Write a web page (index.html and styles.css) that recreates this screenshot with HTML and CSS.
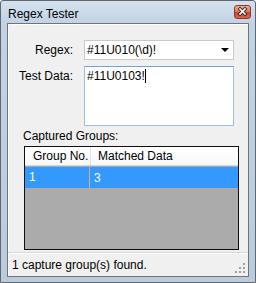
FILE: index.html
```html
<!DOCTYPE html>
<html lang="en-us">
<head>
<meta charset="utf-8">
<title>Regex Tester</title>
<link rel="stylesheet" href="styles.css">
</head>
<body>

<div class="window">
    <div class="titlebar">
        <span class="title">Regex Tester</span>
        <span class="closeBtn">
            <svg width="17" height="14" viewBox="0 0 17 14">
                <path d="M6 4 L11 9 M11 4 L6 9" stroke="#3a2a28" stroke-width="3.4" stroke-linecap="square"/>
                <path d="M6 4 L11 9 M11 4 L6 9" stroke="#ffffff" stroke-width="1.6" stroke-linecap="square"/>
            </svg>
        </span>
    </div>

    <div class="client">
        <div class="formGrid">
            <label class="fieldLabel">Regex:</label>
            <div class="combo">
                <span class="comboText">#11U010(\d)!</span>
                <span class="comboArrow"></span>
            </div>
            <label class="fieldLabel topLabel">Test Data:</label>
            <div class="textBox">#11U0103!<span class="caret"></span></div>
        </div>

        <div class="groupsLabel">Captured Groups:</div>

        <div class="listView">
            <div class="listHeader">
                <span class="colOne">Group No.</span>
                <span class="colTwo">Matched Data</span>
            </div>
            <div class="listRow selected">
                <span class="colOne">1</span>
                <span class="colTwo">3</span>
            </div>
        </div>

        <div class="statusBar">
            <span>1 capture group(s) found.</span>
            <svg class="grip" width="11" height="11" viewBox="0 0 11 11">
                <rect x="8" y="0" width="2" height="2" fill="#a0a0a0"/>
                <rect x="4" y="4" width="2" height="2" fill="#a0a0a0"/>
                <rect x="8" y="4" width="2" height="2" fill="#a0a0a0"/>
                <rect x="0" y="8" width="2" height="2" fill="#a0a0a0"/>
                <rect x="4" y="8" width="2" height="2" fill="#a0a0a0"/>
                <rect x="8" y="8" width="2" height="2" fill="#a0a0a0"/>
            </svg>
        </div>
    </div>
</div>

</body>
</html>
```

FILE: styles.css
```css
body {
    margin: 0;
    font-family: "Liberation Sans", Arial, sans-serif;
    font-size: 12px;
    color: #000;
    background: #fff;
}
.window {
    width: 256px;
    height: 283px;
    box-sizing: border-box;
    border: 1px solid #5e6772;
    border-radius: 3px 3px 0 0;
    background: linear-gradient(#d5e1ee, #c3d3e4 22px, #bccbdc);
    display: flex;
    flex-direction: column;
}
.titlebar {
    height: 22px;
    display: flex;
    align-items: flex-start;
    justify-content: space-between;
    padding: 0 4px 0 7px;
}
.title {
    line-height: 15px;
    padding-top: 6px;
}
.closeBtn {
    margin-top: 4px;
    width: 17px;
    height: 14px;
    box-sizing: border-box;
    border: 1px solid #8b3b2c;
    border-radius: 3px;
    background: linear-gradient(#eeb09c, #dd7a60 45%, #c7452b 55%, #d8664a);
    display: flex;
}
.closeBtn svg {
    margin: -1px;
}
.client {
    flex: 1;
    margin: 0 6px 5px 6px;
    border: 1px solid #6b7480;
    box-shadow: inset 1px 1px 0 #ffffff;
    background: #f0f0f0;
    display: flex;
    flex-direction: column;
}
.formGrid {
    display: grid;
    grid-template-columns: 65px 150px;
    grid-template-rows: 20px 60px;
    column-gap: 11px;
    row-gap: 6px;
    padding-top: 16px;
}
.fieldLabel {
    text-align: right;
    align-self: center;
    line-height: 15px;
}
.topLabel {
    align-self: start;
    padding-top: 3px;
}
.combo {
    box-sizing: border-box;
    border: 1px solid #c9c9c9;
    background: #fff;
    display: flex;
    align-items: center;
    justify-content: space-between;
    padding: 0 3px 0 2px;
}
.comboArrow {
    width: 0;
    height: 0;
    border-left: 4px solid transparent;
    border-right: 4px solid transparent;
    border-top: 4px solid #000;
    margin-right: 1px;
}
.textBox {
    box-sizing: border-box;
    border: 1px solid #9ac1ea;
    border-top-color: #6fa3d9;
    background: #fff;
    padding: 2px 2px;
    line-height: 15px;
}
.caret {
    display: inline-block;
    width: 1px;
    height: 14px;
    background: #000;
    vertical-align: -3px;
}
.groupsLabel {
    margin-top: 3px;
    padding-left: 15px;
    line-height: 15px;
}
.listView {
    margin: 2px 0 0 16px;
    width: 215px;
    height: 104px;
    box-sizing: border-box;
    border: 1px solid #101010;
    background: #ababab;
}
.listHeader {
    height: 19px;
    box-sizing: border-box;
    background: linear-gradient(#ffffff, #f7f8fa);
    border-bottom: 1px solid #d5d5d5;
    display: flex;
    align-items: center;
}
.listHeader .colOne {
    width: 57px;
    padding-left: 8px;
    border-right: 1px solid #e3e3e3;
    line-height: 18px;
}
.listHeader .colTwo {
    padding-left: 7px;
}
.listRow {
    margin-top: 1px;
    height: 21px;
    display: flex;
    align-items: center;
}
.selected {
    background: #3399ff;
    color: #fff;
}
.listRow .colOne {
    width: 60px;
    padding-left: 4px;
    border-right: 1px solid #cfae8a;
    line-height: 21px;
}
.listRow .colTwo {
    padding-left: 4px;
}
.statusBar {
    margin-top: 2px;
    flex: 1;
    border-top: 1px solid #d7d7d7;
    box-shadow: inset 0 1px 0 #ffffff;
    display: flex;
    align-items: flex-start;
    justify-content: space-between;
    padding: 5px 2px 0 4px;
    line-height: 15px;
}
.grip {
    margin-top: 5px;
}
```
